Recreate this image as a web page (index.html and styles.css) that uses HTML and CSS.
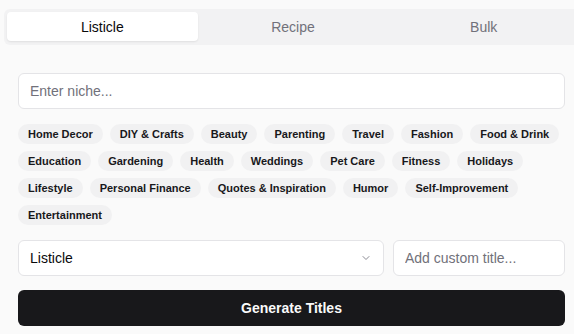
FILE: index.html
```html
<!DOCTYPE html>
<html lang="en">
<head>
  <meta charset="UTF-8">
  <meta name="viewport" content="width=device-width, initial-scale=1.0">
  <title>Title Generator</title>
  <link rel="stylesheet" href="styles.css">
</head>
<body>
  <div class="app">
    <div class="tabs">
      <button class="tab active">Listicle</button>
      <button class="tab">Recipe</button>
      <button class="tab">Bulk</button>
    </div>

    <div class="panel">
      <input type="text" class="field niche" placeholder="Enter niche...">

      <!-- Nichos sugeridos -->
      <div class="chips">
        <span class="chip">Home Decor</span>
        <span class="chip">DIY &amp; Crafts</span>
        <span class="chip">Beauty</span>
        <span class="chip">Parenting</span>
        <span class="chip">Travel</span>
        <span class="chip">Fashion</span>
        <span class="chip">Food &amp; Drink</span>
        <span class="chip">Education</span>
        <span class="chip">Gardening</span>
        <span class="chip">Health</span>
        <span class="chip">Weddings</span>
        <span class="chip">Pet Care</span>
        <span class="chip">Fitness</span>
        <span class="chip">Holidays</span>
        <span class="chip">Lifestyle</span>
        <span class="chip">Personal Finance</span>
        <span class="chip">Quotes &amp; Inspiration</span>
        <span class="chip">Humor</span>
        <span class="chip">Self-Improvement</span>
        <span class="chip">Entertainment</span>
      </div>

      <div class="options">
        <div class="select-wrap">
          <select class="field select">
            <option>Listicle</option>
            <option>How-to</option>
          </select>
          <svg class="chevron" width="12" height="12" viewBox="0 0 24 24" fill="none" stroke="currentColor" stroke-width="2" stroke-linecap="round" stroke-linejoin="round"><path d="M6 9l6 6 6-6"/></svg>
        </div>
        <input type="text" class="field" placeholder="Add custom title...">
      </div>

      <button class="btn-generate">Generate Titles</button>
    </div>
  </div>
</body>
</html>
```

FILE: styles.css
```css
* {
  margin: 0;
  padding: 0;
  box-sizing: border-box;
}

body {
  font-family: 'Liberation Sans', Arial, sans-serif;
  background: #fafafa;
  color: #09090b;
  overflow: hidden;
}

.app {
  padding: 9px 0 0 4px;
}

.tabs {
  display: grid;
  grid-template-columns: repeat(3, 1fr);
  width: 578px;
  height: 36px;
  padding: 3px;
  background: #f2f2f3;
  border-radius: 6px;
}

.tab {
  font-family: inherit;
  font-size: 14px;
  font-weight: 500;
  color: #71717a;
  background: none;
  border: none;
  border-radius: 4px;
  height: 29px;
  cursor: pointer;
}

.tab.active {
  background: #fff;
  color: #09090b;
  box-shadow: 0 1px 2px rgba(0, 0, 0, 0.08);
}

.panel {
  width: 547px;
  margin: 28px 0 0 14px;
  display: flex;
  flex-direction: column;
}

.field {
  font-family: inherit;
  font-size: 14px;
  color: #09090b;
  height: 36px;
  padding: 0 11px;
  border: 1px solid #e4e4e7;
  border-radius: 6px;
  background: #fff;
  width: 100%;
}

.field::placeholder {
  color: #71717a;
}

.chips {
  display: flex;
  flex-wrap: wrap;
  gap: 7px;
  margin: 15px 0;
}

.chip {
  height: 20px;
  line-height: 20px;
  padding: 0 10px;
  font-size: 11px;
  font-weight: 700;
  color: #18181b;
  background: #f1f1f2;
  border-radius: 10px;
}

.options {
  display: grid;
  grid-template-columns: 1fr 172px;
  gap: 9px;
}

.select-wrap {
  position: relative;
}

.select {
  appearance: none;
  -webkit-appearance: none;
}

.chevron {
  position: absolute;
  right: 12px;
  top: 12px;
  color: #8a8a93;
  pointer-events: none;
}

.btn-generate {
  margin-top: 14px;
  height: 36px;
  border: none;
  border-radius: 6px;
  background: #18181b;
  color: #fafafa;
  font-family: inherit;
  font-size: 14px;
  font-weight: 700;
  cursor: pointer;
}
```
